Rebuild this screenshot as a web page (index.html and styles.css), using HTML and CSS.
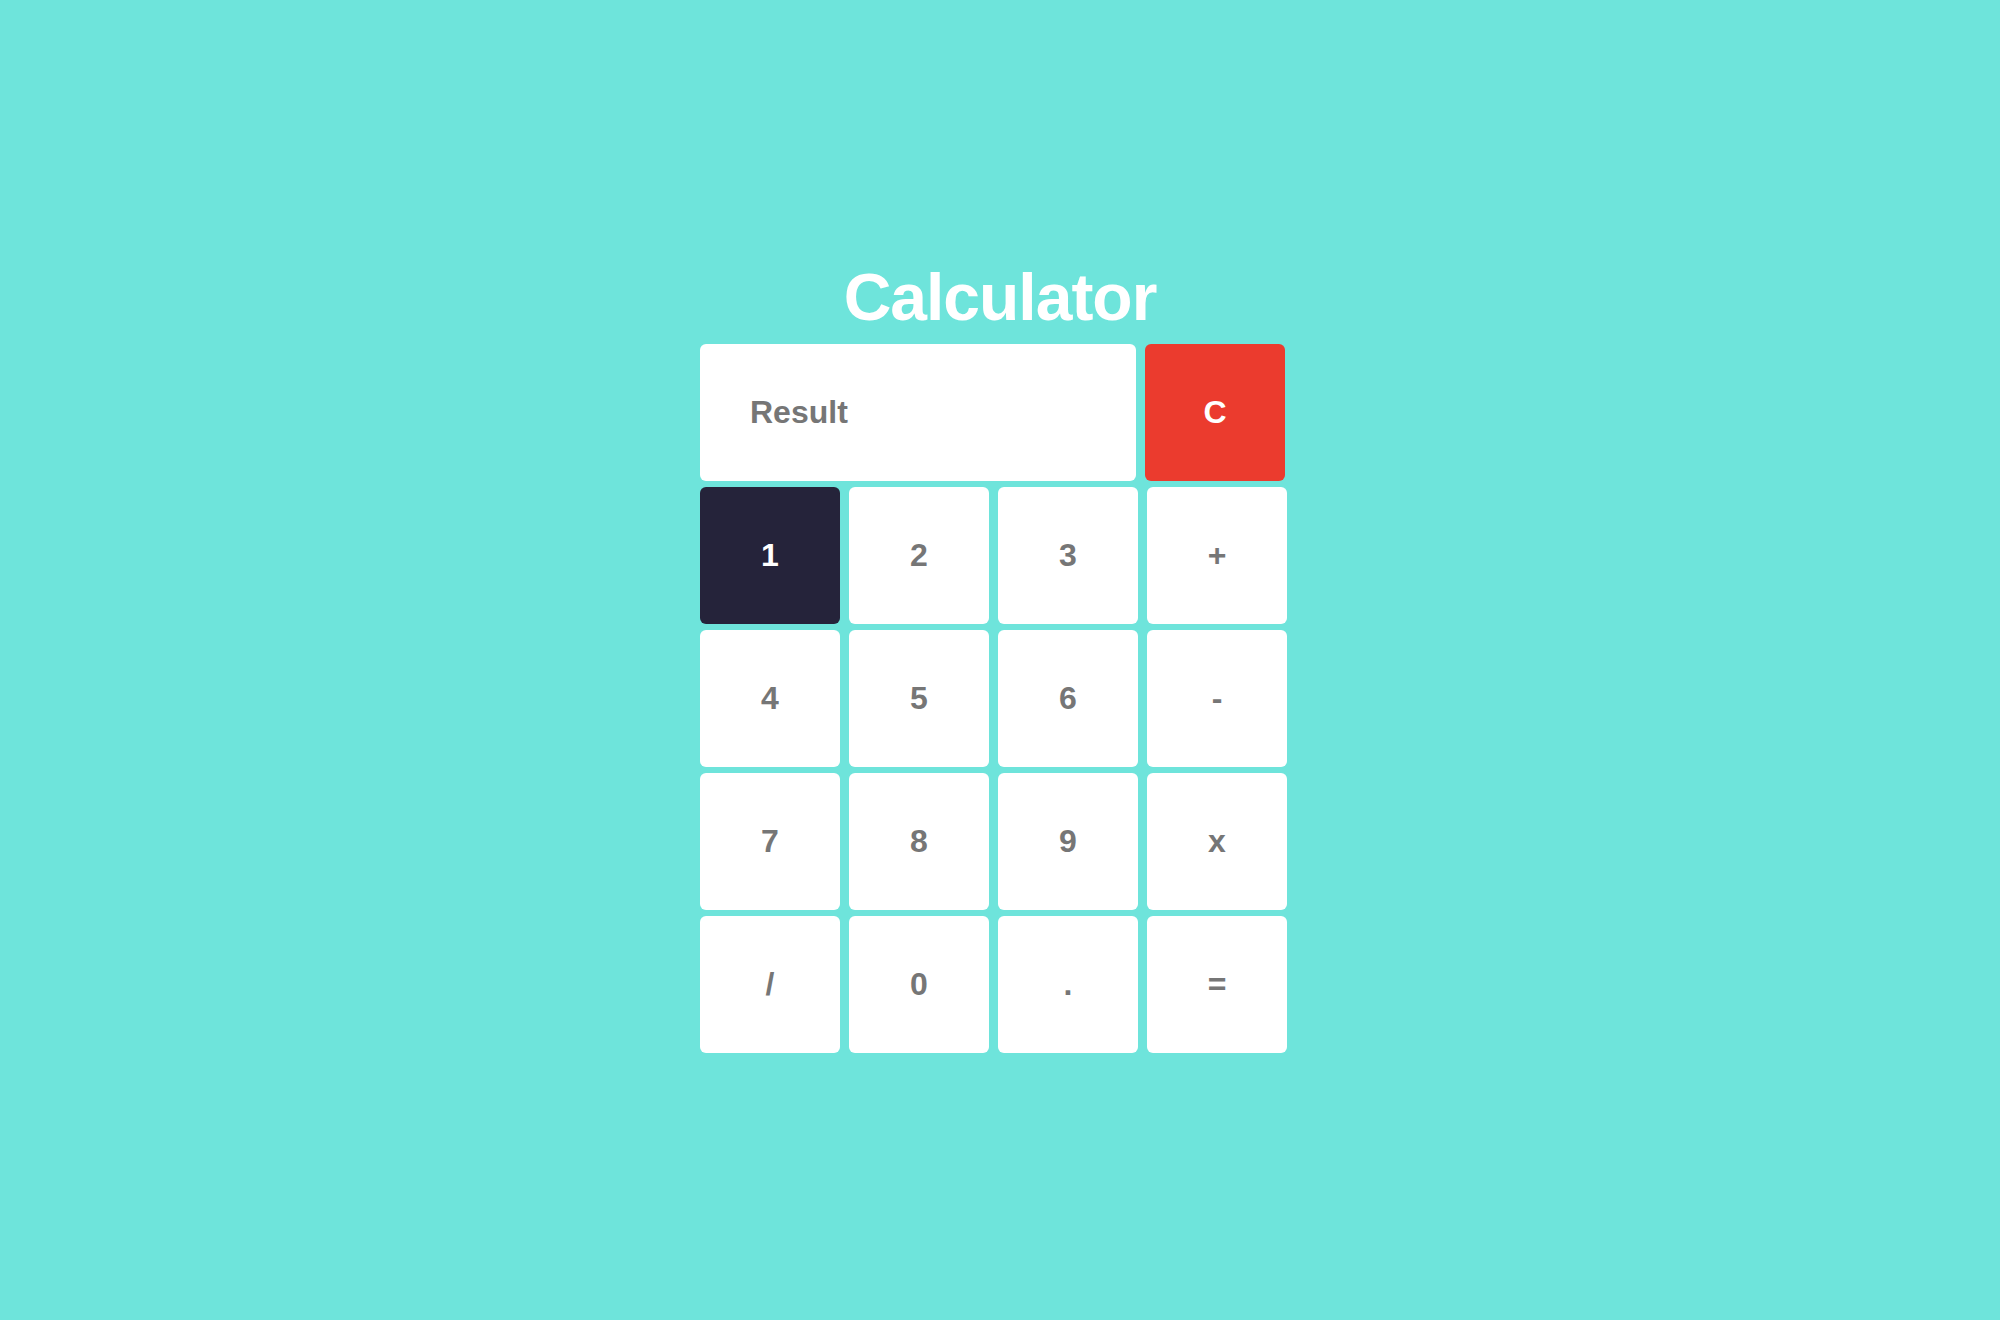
FILE: index.html
```html
<!DOCTYPE html>
<html lang="en">
<head>
<meta charset="utf-8">
<title>Calculator</title>
<link rel="stylesheet" href="styles.css">
</head>
<body>
<main class="page">
  <div class="calc">
    <h1 class="title">Calculator</h1>
    <div class="top-row">
      <div class="result">Result</div>
      <button class="key key-clear">C</button>
    </div>
    <div class="keys">
      <button class="key key-active">1</button>
      <button class="key">2</button>
      <button class="key">3</button>
      <button class="key">+</button>
      <button class="key">4</button>
      <button class="key">5</button>
      <button class="key">6</button>
      <button class="key">-</button>
      <button class="key">7</button>
      <button class="key">8</button>
      <button class="key">9</button>
      <button class="key">x</button>
      <button class="key">/</button>
      <button class="key">0</button>
      <button class="key">.</button>
      <button class="key">=</button>
    </div>
  </div>
</main>
</body>
</html>
```
FILE: styles.css
```css
html, body {
  margin: 0;
  padding: 0;
  background: #6ee4db;
}
body {
  width: 2000px;
  height: 1320px;
  font-family: "Liberation Sans", Arial, Helvetica, sans-serif;
}
.page {
  display: flex;
  justify-content: center;
  padding-top: 264px;
}
.calc {
  width: 600px;
  display: flex;
  flex-direction: column;
  gap: 6px;
}
.title {
  margin: 0 0 8px;
  text-align: center;
  color: #ffffff;
  font-size: 66px;
  line-height: 66px;
  font-weight: 700;
  letter-spacing: -1px;
}
.top-row {
  display: flex;
  gap: 9px;
  width: 585px;
}
.result {
  flex: 1;
  height: 137px;
  background: #ffffff;
  border-radius: 6px;
  display: flex;
  align-items: center;
  padding-left: 50px;
  color: #767676;
  font-size: 32px;
  font-weight: 700;
}
.keys {
  display: grid;
  grid-template-columns: repeat(4, 140px);
  grid-auto-rows: 137px;
  column-gap: 9px;
  row-gap: 6px;
}
.key {
  border: none;
  margin: 0;
  padding: 0;
  width: 140px;
  height: 137px;
  background: #ffffff;
  border-radius: 6px;
  color: #767676;
  font-family: "Liberation Sans", Arial, Helvetica, sans-serif;
  font-size: 32px;
  font-weight: 700;
  display: flex;
  align-items: center;
  justify-content: center;
}
.key-clear {
  background: #eb3b2e;
  color: #ffffff;
}
.key-active {
  background: #25233a;
  color: #ffffff;
}
```
